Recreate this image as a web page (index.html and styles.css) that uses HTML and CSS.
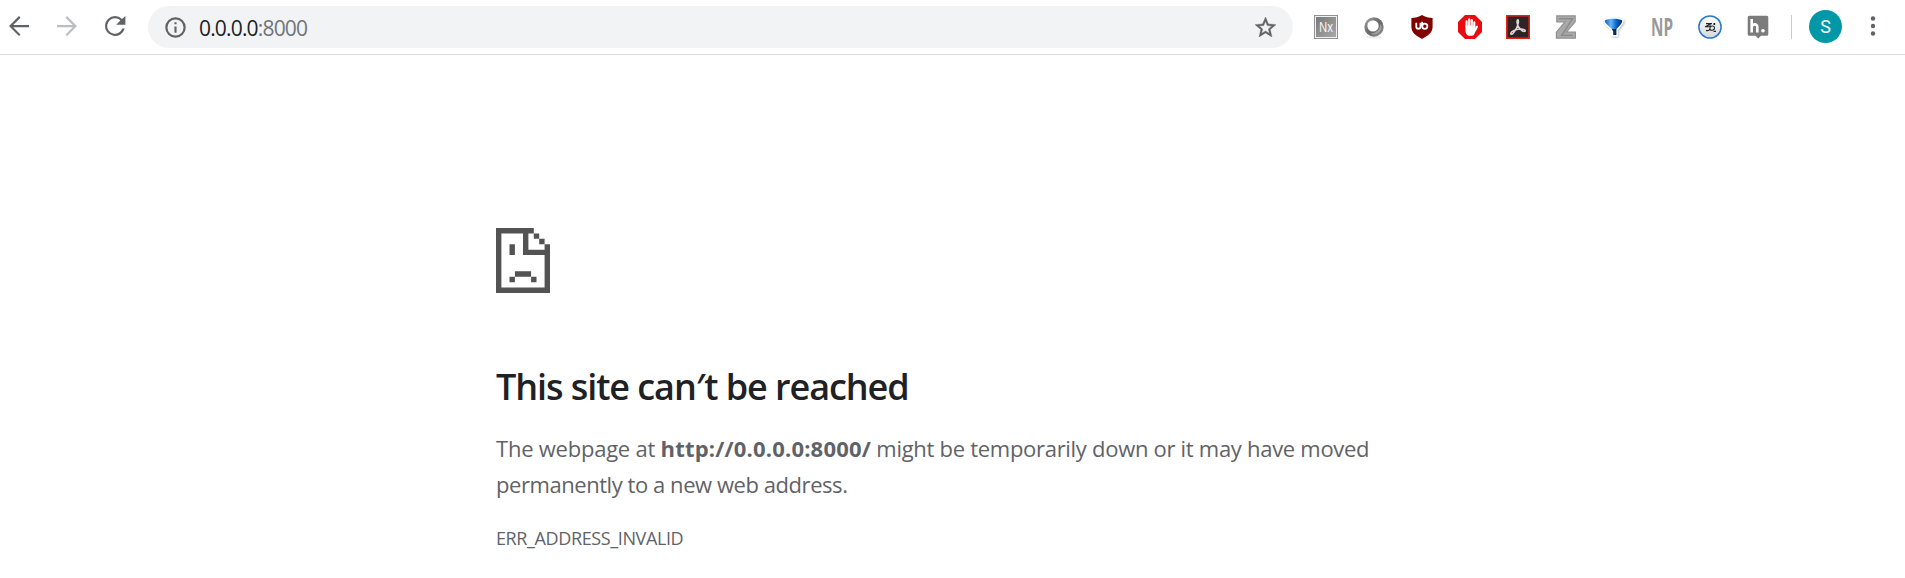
FILE: index.html
```html
<!DOCTYPE html>
<html lang="en">
<head>
<meta charset="utf-8">
<title>0.0.0.0:8000</title>
<link rel="stylesheet" href="styles.css">
</head>
<body>
<header class="toolbar">
  <nav class="nav">
    <svg class="nav-icon" viewBox="0 0 24 24"><path d="M20 11.1H7.4l5.8-5.7L12 4l-8 8 8 8 1.2-1.3-5.8-5.8H20z"/></svg>
    <svg class="nav-icon disabled" viewBox="0 0 24 24"><path d="M4 11.1h12.6l-5.8-5.7L12 4l8 8-8 8-1.2-1.3 5.8-5.8H4z"/></svg>
    <svg class="nav-icon" viewBox="0 0 24 24"><path d="M17.65 6.35A7.96 7.96 0 0 0 12 4a8 8 0 1 0 7.73 10H17.8A6.2 6.2 0 1 1 12 5.8c1.7 0 3.2.7 4.3 1.8L13 11h7.3V4z"/></svg>
  </nav>
  <div class="omnibox">
    <svg class="info" viewBox="0 0 20 20"><circle cx="10" cy="10" r="8.7" fill="none" stroke="#5f6368" stroke-width="2.1"/><path d="M9 5h2v2H9zM9 9h2v6H9z"/></svg>
    <span class="url">0.0.0.0<span class="port">:8000</span></span>
    <svg class="star" viewBox="0 0 24 24"><path d="M22 9.24l-7.19-.62L12 2 9.19 8.63 2 9.24l5.46 4.73L5.82 21 12 17.27 18.18 21l-1.63-7.03zM12 15.4l-3.76 2.27 1-4.28-3.32-2.88 4.38-.38L12 6.1l1.71 4.04 4.38.38-3.32 2.88 1 4.28z"/></svg>
  </div>
  <div class="extensions">
    <svg class="ext" viewBox="0 0 24 24">
      <defs><linearGradient id="nx" x1="0" y1="0" x2="1" y2="1"><stop offset="0" stop-color="#777"/><stop offset="1" stop-color="#aaa"/></linearGradient></defs>
      <rect width="24" height="24" fill="#919191"/><rect x="1.5" y="1.5" width="21" height="21" fill="url(#nx)" stroke="#f1f1f1"/>
      <text class="nx" x="5" y="17" textLength="14" lengthAdjust="spacingAndGlyphs">Nx</text>
    </svg>
    <svg class="ext" viewBox="0 0 24 24">
      <defs><linearGradient id="ring" x1="0" y1="0" x2="1" y2="1"><stop offset="0" stop-color="#aaa"/><stop offset=".5" stop-color="#666"/><stop offset="1" stop-color="#999"/></linearGradient></defs>
      <ellipse cx="12" cy="22.3" rx="8" ry="1.5" fill="#eee"/>
      <circle cx="12" cy="12" r="9.7" fill="url(#ring)"/><circle cx="12" cy="12" r="7.2" fill="#686868"/><circle cx="11" cy="10.9" r="5.7" fill="#fff"/><path d="M18.200 8.4a7 7 0 0 1-9.400 9.900 9 9 0 0 0 9.400-9.900z" fill="#a2a2a2"/>
    </svg>
    <svg class="ext" viewBox="0 0 24 24">
      <path d="M12 0c3 2 7 3 10.600 3v9c0 6-5.600 9-10.600 12C7 21 1.400 18 1.400 12V3C5 3 9 2 12 0z" fill="#800000"/>
      <path d="M6.300 7.800v4.300c0 2.200 4.200 2.200 4.200 0V7.800M12.200 6.800v4.400" fill="none" stroke="#fff" stroke-width="1.800"/><circle cx="14.800" cy="11.200" r="2.600" fill="none" stroke="#fff" stroke-width="1.800"/>
    </svg>
    <svg class="ext" viewBox="0 0 24 24">
      <path d="M7 0h10l7 7v10l-7 7H7l-7-7V7z" fill="#e80c10"/>
      <g fill="none" stroke="#fff" stroke-width="2.100" stroke-linecap="round"><path d="M8.600 12V6.300M11.200 11V4.300M13.800 11V5M16.300 12V7.200M17 15.500l2-3.800"/></g>
      <path d="M7.500 10.500h9.800v5.500c0 2-1.600 4.700-3 4.700h-3.600c-1.600 0-3.200-2.200-3.200-4.700z" fill="#fff"/>
    </svg>
    <svg class="ext" viewBox="0 0 24 24">
      <rect x=".8" y=".8" width="22.400" height="22.400" fill="#302225" stroke="#e52313" stroke-width="1.600"/>
      <path d="M4.800 18.200c.5-2 5-3.800 9-4.100 3.800-.2 6.200.8 5.300 2.100-2.200 1.500-7.200-3.700-7.900-7.900-.8-4.500 1.700-4.500 1.200-.7C11.800 11.500 7.500 19 5.600 19.300c-.6.1-.9-.5-.8-1.100z" fill="none" stroke="#ded6d6" stroke-width="1.500"/>
    </svg>
    <svg class="ext" viewBox="0 0 24 24">
      <path d="M2.800.8h18.400v6l-8.800 10.400h9v6H2.400v-6L11 6.800H2.800z" fill="#aaa" stroke="#929292" stroke-width="1.200"/>
      <path d="M5 3.700h13.500L7.700 20.300h11" fill="none" stroke="#8b8b8b" stroke-width="1.500"/>
    </svg>
    <svg class="ext" viewBox="0 0 24 24">
      <defs><linearGradient id="fan"><stop offset="0" stop-color="#0a5bc4"/><stop offset=".35" stop-color="#64baf5"/><stop offset=".65" stop-color="#0868cd"/><stop offset="1" stop-color="#032a68"/></linearGradient></defs>
      <path class="fan-shadow" d="M2.800 5.500C6 3 17 3 20.200 5.500c.4 2.500-3.200 6-6 9v5.500h-4v-5.500C7.500 11.500 2.400 8 2.800 5.500z"/>
      <path d="M2.800 5.500C6 3 17 3 20.200 5.500c.4 2.500-3.200 6-6 9h-4C7.500 11.500 2.400 8 2.800 5.500z" fill="url(#fan)"/><path d="M9.800 14h4.600v6h-3.200v-3.500z" fill="#052854"/>
    </svg>
    <svg class="ext" viewBox="0 0 24 24"><text class="np" x="1" y="20.800" textLength="22" lengthAdjust="spacingAndGlyphs">NP</text></svg>
    <svg class="ext" viewBox="0 0 24 24">
      <defs><linearGradient id="disc" x1="0" y1="0" x2="0" y2="1"><stop offset="0" stop-color="#fff"/><stop offset="1" stop-color="#d4d7dc"/></linearGradient></defs>
      <circle cx="12" cy="12" r="11.100" fill="url(#disc)" stroke="#2e78c8" stroke-width="1.500"/>
      <path d="M8 8.600h6M11.800 8.600c-1 2.200-3.500 2.800-4.800 3.200h4.500M8 15.400c3 .8 4-.8 4-2.600s4-2.800 4.500-.3-3 3.600-4.500 2M12 12V9M15.500 16.400h2.500" fill="none" stroke="#222" stroke-width="1.100"/><circle cx="16.300" cy="9" r="1"/>
    </svg>
    <svg class="ext" viewBox="0 0 24 24">
      <path d="M3.200.8h17.600q1.500 0 1.500 1.500v17q0 1.500-1.500 1.500H15L12.200 23.500 9.500 20.800H3.200q-1.500 0-1.500-1.500v-17Q1.700.8 3.200.8z" fill="#7c7c7c"/>
      <path d="M5.700 4v13.500M5.700 12c0-3 5.600-4 5.600 0v5.500" fill="none" stroke="#fff" stroke-width="2.600"/><circle cx="17" cy="15.700" r="1.800" fill="#fff"/>
    </svg>
  </div>
  <div class="divider"></div>
  <div class="avatar">S</div>
  <svg class="menu" viewBox="0 0 6 20"><circle cx="3" cy="2.500" r="2.200"/><circle cx="3" cy="10" r="2.200"/><circle cx="3" cy="17.500" r="2.200"/></svg>
</header>
<main class="error">
  <svg class="sad" viewBox="0 0 10 12" preserveAspectRatio="none"><path d="M0 0H7V1H6V4H9V3H10V12H0ZM1 1V11H9V5H5V1ZM7 1H8V2H7ZM8 2H9V3H8ZM2.500 3H3.500V5H2.500ZM3.500 8H6.500V9H3.500ZM2.500 9H3.500V10H2.500ZM6.500 9H7.500V10H6.500Z" fill-rule="evenodd"/></svg>
  <h1 class="title">This site can<span class="apostrophe">′</span>t be reached</h1>
  <p class="summary"><span class="lead">The webpage at </span><strong class="address">http://0.0.0.0:8000/</strong><span class="rest"> might be temporarily down or it may have moved</span><br><span class="second">permanently to a new web address.</span></p>
  <div class="code">ERR_ADDRESS_INVALID</div>
</main>
</body>
</html>
```
FILE: styles.css
```css
* { box-sizing: border-box; }
body {
  margin: 0;
  height: 578px;
  overflow: hidden;
  background: #fff;
  font-family: "Open Sans", "Noto Sans", sans-serif;
}
svg { display: block; flex: none; }
.toolbar {
  display: flex;
  align-items: flex-start;
  height: 55px;
  border-bottom: 1px solid #d9dbdd;
}
.nav {
  display: flex;
  gap: 18px;
  padding: 11px 0 0 4px;
  width: 148px;
}
.nav-icon { width: 30px; height: 30px; fill: #5f6368; }
.disabled { fill: #bbbdbf; }
.omnibox {
  display: flex;
  align-items: center;
  width: 1145px;
  height: 42px;
  margin-top: 6px;
  padding: 0 15px 0 17px;
  border-radius: 21px;
  background: #f1f3f4;
}
.info { width: 21px; height: 21px; fill: #5f6368; }
.url {
  margin-left: 13px;
  padding-top: 1px;
  font-size: 21px;
  line-height: 28px;
  letter-spacing: -0.83px;
  color: #202124;
}
.port { color: #70757a; }
.star {
  width: 25px;
  height: 25px;
  margin-left: auto;
  fill: #5f6368;
  stroke: #5f6368;
  stroke-width: 0.4px;
}
.extensions {
  display: flex;
  gap: 24px;
  margin: 15px 0 0 21px;
}
.ext { width: 24px; height: 24px; overflow: visible; }
.nx { font: 14px "Open Sans", sans-serif; fill: #fff; }
.np { font: bold 25px "Open Sans", sans-serif; fill: #999; }
.fan-shadow {
  fill: #fff;
  stroke: #fff;
  stroke-width: 3px;
  filter: drop-shadow(1px 1px 1px #bbb);
}
.divider { width: 1px; height: 24px; margin: 15px 0 0 21px; background: #c8cacc; }
.avatar {
  width: 33px;
  height: 33px;
  margin: 10px 0 0 17px;
  border-radius: 50%;
  background: #0097a7;
  color: #fff;
  font: 18px/33px Roboto, sans-serif;
  text-align: center;
}
.menu { width: 6px; height: 20px; margin: 16px 0 0 28px; fill: #5f6368; }
.error { width: 913px; margin-left: 496px; padding-top: 173px; }
.sad { width: 54px; height: 65px; fill: #535353; }
.title {
  margin: 69px 0 0;
  font-size: 36px;
  font-weight: 600;
  line-height: 50px;
  letter-spacing: -1.07px;
  color: #202124;
  white-space: nowrap;
}
.summary {
  margin: 18px 0 0;
  font-size: 22px;
  line-height: 36px;
  color: #5f6368;
  white-space: nowrap;
}
.lead { letter-spacing: -0.23px; }
.address { letter-spacing: 0.18px; }
.rest { letter-spacing: -0.29px; }
.second { letter-spacing: -0.44px; }
.code {
  margin-top: 23px;
  font-size: 18px;
  line-height: 26px;
  letter-spacing: -0.38px;
  color: #5f6368;
}
```
